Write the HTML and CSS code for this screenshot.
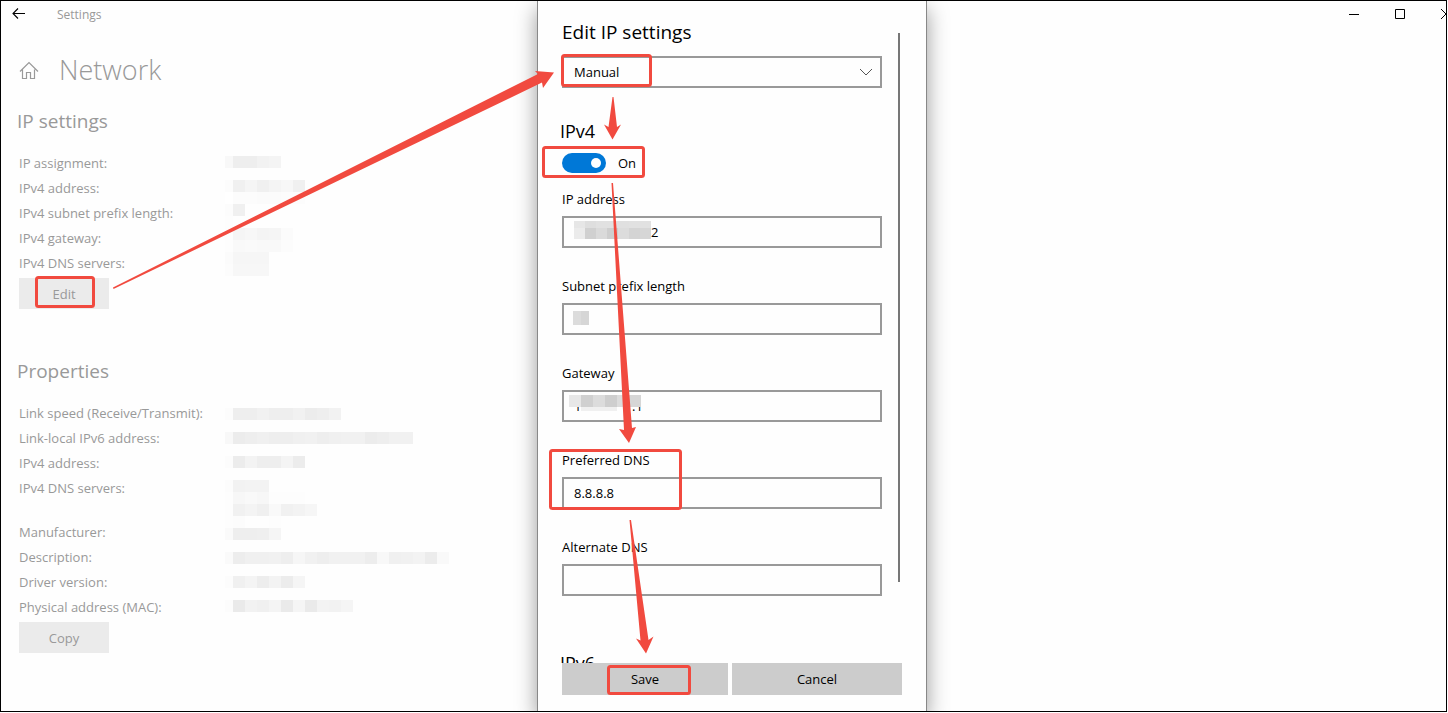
FILE: index.html
```
<!DOCTYPE html>
<html lang="en">
<head>
    <meta charset="UTF-8">
    <meta name="viewport" content="width=device-width, initial-scale=1.0">
    <title>Settings</title>
    <link rel="stylesheet" href="styles.css">
</head>
<body>
    <div class="window">
        <header class="titlebar">
            <button class="icon-button" aria-label="Back">
                <svg width="14" height="12" viewBox="0 0 14 12"><path d="M13 5.500H1M6 0.500L1 5.500l5 5" fill="none" stroke="#000" stroke-width="1.1"/></svg>
            </button>
            <span class="app-name">Settings</span>
            <div class="window-controls">
                <button class="icon-button" aria-label="Minimize">
                    <svg width="10" height="10" viewBox="0 0 10 10"><path d="M0 5.5h10" stroke="#000"/></svg>
                </button>
                <button class="icon-button" aria-label="Maximize">
                    <svg width="10" height="10" viewBox="0 0 10 10"><path d="M.5.5h9v9h-9z" fill="none" stroke="#000"/></svg>
                </button>
                <button class="icon-button" aria-label="Close">
                    <svg width="10" height="10" viewBox="0 0 10 10"><path d="M0 0l10 10M10 0L0 10" stroke="#000"/></svg>
                </button>
            </div>
        </header>

        <main class="page">
            <div class="page-title">
                <svg width="20" height="19" viewBox="0 0 20 19"><path d="M1 10.500L10 1.500 19 10.500M3.500 8.500v9h4v-6h4v6h4v-9" fill="none" stroke="#999" stroke-width="1.2"/></svg>
                <h1>Network</h1>
            </div>

            <section class="section">
                <h2>IP settings</h2>
                <div class="details">
                    <ul class="names">
                        <li>IP assignment:</li>
                        <li>IPv4 address:</li>
                        <li>IPv4 subnet prefix length:</li>
                        <li>IPv4 gateway:</li>
                        <li>IPv4 DNS servers:</li>
                    </ul>
                    <div class="mosaic" data-tones="f8 ee ee f2 f4//fc f0 f5 f0 f4 f7 f0/ff fc fc fb fb fc fc/fc f0/fd/fd f5 f7 f4 f5 fb/fd f9 fa f9 f9 fc/fb f6 f6 f6/fc f7 f7 f7"></div>
                </div>
                <button class="page-button">Edit</button>
            </section>

            <section class="section">
                <h2>Properties</h2>
                <div class="details">
                    <ul class="names">
                        <li>Link speed (Receive/Transmit):</li>
                        <li>Link-local IPv6 address:</li>
                        <li>IPv4 address:</li>
                        <li class="two-line">IPv4 DNS servers:</li>
                        <li>Manufacturer:</li>
                        <li>Description:</li>
                        <li>Driver version:</li>
                        <li>Physical address (MAC):</li>
                    </ul>
                    <div class="mosaic mosaic-low" data-tones="fc ee ee f1 ee ee f1 ec ee f2//f8 ec ee f0 ee ee f0 f1 ee f0 f1 f1 ec ee f1 f1//fc ec f3 ee ee f4 ec//fc f2 f3 f3/fd f7 f9 f7 fd fd fd/fd f1 f4 f0 f9 f1 f3 f6/fd fc fe fe fd/fa ee ee ef f5//fa ed f0 f0 f1 ee f6 f1 ee f1 f1 f1 ed f8 f0 f1 f3 ec f9//fc f0 f4 ed f3 ec f5//fc ea f2 f0 f4 ea f5 ea f3 f2 f5"></div>
                </div>
                <button class="page-button">Copy</button>
            </section>
        </main>

        <div class="overlay">
            <form class="dialog">
                <div class="dialog-body">
                    <h2><label for="mode">Edit IP settings</label></h2>
                    <div class="select-wrap">
                        <select id="mode"><option>Manual</option></select>
                        <svg class="chevron" width="12" height="8" viewBox="0 0 12 8"><path d="M0 1l6 6 6-6" fill="none" stroke="#555"/></svg>
                    </div>

                    <h3>IPv4</h3>
                    <div class="toggle-row">
                        <input type="checkbox" class="toggle" id="ipv4" checked>
                        <label for="ipv4">On</label>
                    </div>

                    <div class="field">
                        <label for="ip">IP address</label>
                        <input type="text" id="ip" class="masked-start" value="2">
                        <div class="mask mask-ip" data-tones="e6 de e1 e1 e0 e1 e1/eb d0 da ce dc d4 d6"></div>
                    </div>
                    <div class="field">
                        <label for="prefix">Subnet prefix length</label>
                        <input type="text" id="prefix">
                        <div class="mask mask-prefix" data-tones="dc d6"></div>
                    </div>
                    <div class="field">
                        <label for="gateway">Gateway</label>
                        <input type="text" id="gateway" value="1&nbsp;&nbsp;&nbsp;&nbsp;&nbsp;&nbsp;&nbsp;&nbsp;&nbsp;&nbsp;&nbsp;&nbsp;&nbsp;&nbsp;&nbsp;.1">
                        <div class="mask mask-gateway" data-tones="e7 d0 dc ce dc d6/fe f0 f0 f0"></div>
                    </div>
                    <div class="field">
                        <label for="dns1">Preferred DNS</label>
                        <input type="text" id="dns1" value="8.8.8.8">
                    </div>
                    <div class="field">
                        <label for="dns2">Alternate DNS</label>
                        <input type="text" id="dns2">
                    </div>
                    <h3 class="next-group">IPv6</h3>
                    <div class="scroll-thumb"></div>
                </div>
                <div class="actions">
                    <button type="button" class="save">Save</button>
                    <button type="button">Cancel</button>
                </div>
            </form>
        </div>

        <!-- step markers and arrows -->
        <svg class="guide" width="1446" height="711" viewBox="1 1 1446 711">
            <g fill="none" stroke="#f14a3f" stroke-width="3">
                <rect x="36.5" y="277.5" width="57" height="29" rx="2"/>
                <rect x="562.5" y="55.5" width="88" height="30" rx="2"/>
                <rect x="543.5" y="147.5" width="100" height="29" rx="2"/>
                <rect x="550.5" y="450.5" width="130" height="58" rx="2"/>
                <rect x="608.5" y="666.5" width="81" height="27" rx="2"/>
            </g>
            <g fill="#f14a3f">
                <path d="M113 287.500L538 74 535 71 554 72.500 543 88 542 82.500 113.500 289z"/>
                <path d="M612.500 97h1L617 127l4-2.500-8.500 15-8.500-15 4.500 2.500z"/>
                <path d="M611.500 183h1.500L632 428l4-1-7 16-10-14 5 1z"/>
                <path d="M629.500 520h1.500L648.500 640l5-3.500-7.500 17-10-15 4.500 2z"/>
            </g>
        </svg>
    </div>

    <script>
        // "f8 ee/fc" -> one row per slash, one grey cell per hex value
        document.querySelectorAll('[data-tones]').forEach(function(el) {
            el.dataset.tones.split('/').forEach(function(line) {
                const row = document.createElement('div');
                row.className = 'mosaic-row';
                line.split(' ').filter(Boolean).forEach(function(tone) {
                    const cell = document.createElement('span');
                    cell.style.background = '#' + tone + tone + tone;
                    row.appendChild(cell);
                });
                el.appendChild(row);
            });
        });
    </script>
</body>
</html>
```
FILE: styles.css
```
* { box-sizing: border-box; }
body { margin: 0; background: #fff; font-family: "Open Sans", "Noto Sans", sans-serif; font-size: 13px; color: #000; }
h1, h2, h3, ul { margin: 0; padding: 0; font-weight: normal; }
button, input, select { font: inherit; color: inherit; border: 0; border-radius: 0; margin: 0; padding: 0; }

.window { position: relative; margin: 0 1px 1px 0; height: calc(100vh - 1px); min-height: 700px; border: 1px solid #000; background: #fefefe; overflow: hidden; }

.titlebar { display: flex; align-items: center; height: 26px; padding-left: 11px; }
.icon-button { display: flex; background: none; }
.app-name { margin-left: 31px; font-size: 12px; color: #999; }
.window-controls { display: flex; gap: 36px; margin-left: auto; margin-right: -5px; }

.page { padding: 20px 18px; color: #999; }
.page-title { display: flex; align-items: center; gap: 20px; height: 46px; }
.page-title h1 { font-size: 27px; font-weight: 300; line-height: 46px; }
.section { margin-bottom: 48px; }
.section h2 { margin: 14px 0 16px -2px; font-size: 19px; line-height: 28px; }
.details { display: flex; margin-bottom: 2px; }
.names { list-style: none; width: 206px; white-space: nowrap; }
.names li { height: 25px; line-height: 25px; }
.names .two-line { height: 44px; }
.page-button { width: 90px; height: 31px; background: #ebebeb; }

.mosaic { margin-top: 5px; height: 0; }
.mosaic-low { margin-top: 7px; }
.mosaic-row { display: flex; height: 12px; }
.mosaic-row span { width: 12px; }
.mosaic .mosaic-row span:first-child { width: 8px; }

.overlay { position: absolute; inset: 0; display: flex; justify-content: center; padding-left: 17px; }
.dialog { position: relative; display: flex; flex-direction: column; width: 390px; padding: 17px 24px 16px; background: #fefefe; border: solid #888; border-width: 0 1px; box-shadow: 0 8px 20px rgba(0, 0, 0, 0.4); }
.dialog-body { flex: 1; min-height: 0; width: 322px; margin-left: -2px; padding-left: 2px; overflow: hidden; }
.dialog h2 { font-size: 19px; line-height: 28px; }
.dialog h3 { font-size: 18px; line-height: 28px; margin-left: -2px; }
.select-wrap { position: relative; margin: 10px 0 29px; }
.select-wrap select { appearance: none; display: block; width: 100%; height: 32px; padding: 0 10px; border: 2px solid #999; background: #fefefe; }
.chevron { position: absolute; right: 10px; top: 12px; pointer-events: none; }

.toggle-row { display: flex; align-items: center; gap: 12px; height: 36px; margin-bottom: 9px; }
.toggle { appearance: none; display: flex; justify-content: flex-end; align-items: center; width: 44px; height: 20px; padding: 5px; border-radius: 10px; background: #0078d7; }
.toggle::after { content: ""; width: 10px; height: 10px; border-radius: 50%; background: #fff; }

.field { position: relative; margin-bottom: 29px; }
.field label { display: block; height: 26px; line-height: 18px; }
.field input { display: block; width: 100%; height: 32px; padding: 0 10px; border: 2px solid #999; background: #fefefe; }
.field .masked-start { padding-left: 87px; }
.next-group { margin-top: 53px; }

.mask { position: absolute; left: 12px; top: 31px; }
.mask-ip .mosaic-row span { width: 11px; }
.mask-ip .mosaic-row { height: 11px; }
.mask-ip .mosaic-row:first-child { height: 7px; }
.mask-prefix { left: 11px; top: 34px; }
.mask-prefix .mosaic-row { height: 14px; }
.mask-prefix .mosaic-row span { width: 8px; }
.mask-gateway { left: 7px; }
.mask-gateway .mosaic-row:last-child { height: 4px; }
.mask-gateway .mosaic-row:last-child span:first-child { visibility: hidden; }

.scroll-thumb { position: absolute; top: 32px; right: 26px; width: 2px; height: 549px; background: #777; }

.actions { display: flex; gap: 4px; width: 340px; }
.actions button { flex: 1; height: 32px; background: #ccc; }
.actions .save { flex: 0 0 166px; }

.guide { position: absolute; left: 0; top: 0; pointer-events: none; }
```
